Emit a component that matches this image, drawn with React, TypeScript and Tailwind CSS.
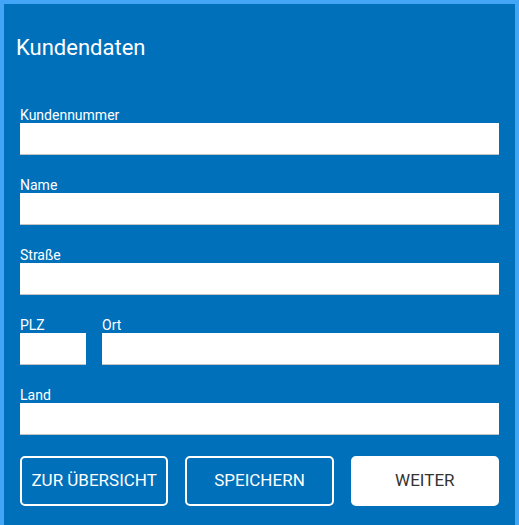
import React from "react";

type FieldProps = { label: string; className?: string };

function Field({ label, className = "" }: FieldProps) {
  return (
    <label className={`flex flex-col ${className}`}>
      <span className="text-[14px] leading-[16px] text-white">{label}</span>
      <input
        type="text"
        className="h-8 w-full bg-white border-0 border-b border-[#c4c4c4] outline-none px-2 text-[14px] text-[#333]"
      />
    </label>
  );
}

export default function App() {
  return (
    <div className="w-[519px] h-[525px] bg-[#0070ba] border-4 border-b-0 border-[#42a5f5] font-['Roboto',sans-serif]">
      <h1 className="pl-3 pt-[31px] text-[22px] leading-[26px] font-normal text-white">
        Kundendaten
      </h1>

      <form className="px-4 mt-[46px]" onSubmit={(e) => e.preventDefault()}>
        <div className="flex flex-col gap-[22px]">
          <Field label="Kundennummer" />
          <Field label="Name" />
          <Field label="Straße" />
          <div className="flex gap-4">
            <Field label="PLZ" className="w-[66px] shrink-0" />
            <Field label="Ort" className="flex-1" />
          </div>
          <Field label="Land" />
        </div>

        <div className="mt-[21px] grid grid-cols-3 gap-[17px]">
          <button
            type="button"
            className="h-[50px] rounded-[5px] border-2 border-white text-white text-[17px] uppercase"
          >
            Zur Übersicht
          </button>
          <button
            type="button"
            className="h-[50px] rounded-[5px] border-2 border-white text-white text-[17px] uppercase"
          >
            Speichern
          </button>
          <button
            type="submit"
            className="h-[50px] rounded-[5px] border-2 border-white bg-white text-[#333] text-[17px] uppercase"
          >
            Weiter
          </button>
        </div>
      </form>
    </div>
  );
}
